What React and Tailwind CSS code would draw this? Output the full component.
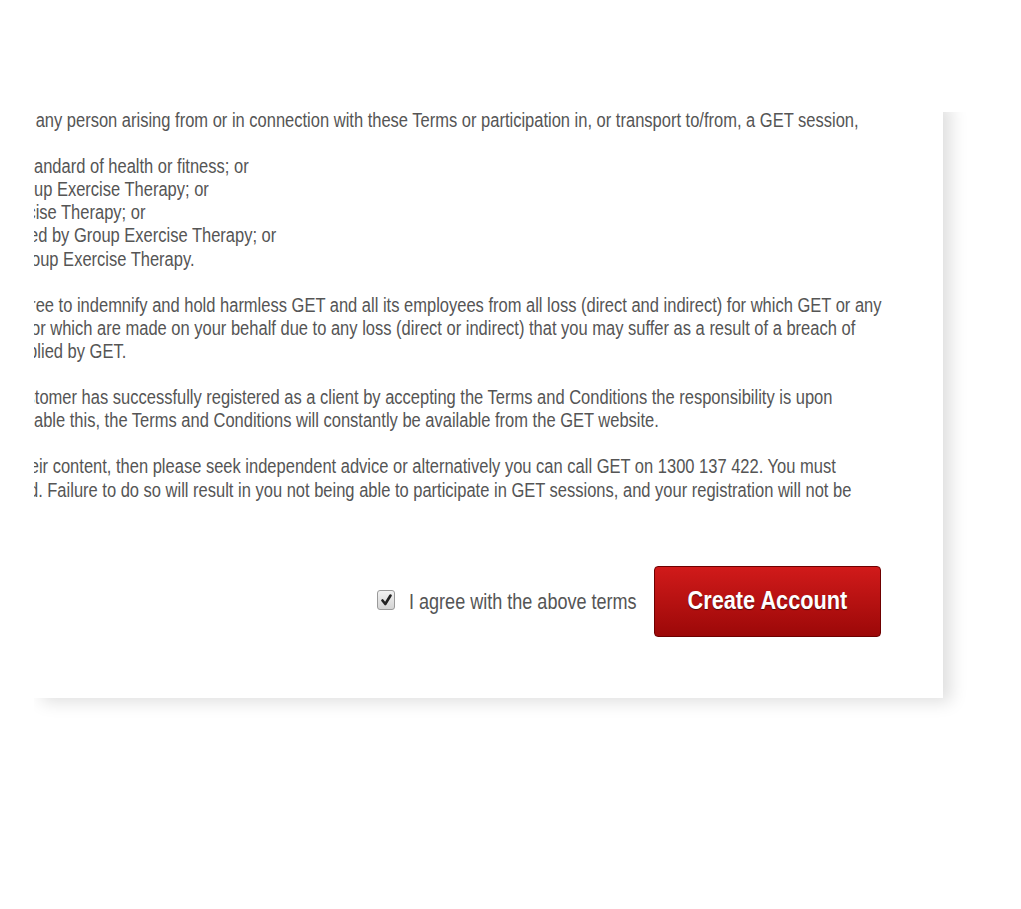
import React from "react";

const FONT = { fontFamily: '"Liberation Sans", Arial, sans-serif' };

// each line: [hidden prefix (clipped), visible px of the prefix, visible text]
const PARAGRAPHS = [
  [["", 2, "any person arising from or in connection with these Terms or participation in, or transport to/from, a GET session,"]],
  [
    ["st", 0, "andard of health or fitness; or"],
    ["Gro", 0, "up Exercise Therapy; or"],
    ["Exerc", 2, "ise Therapy; or"],
    ["provide", 5, "d by Group Exercise Therapy; or"],
    ["Gro", 7.5, "up Exercise Therapy."],
  ],
  [
    ["agr", 2, "ee to indemnify and hold harmless GET and all its employees from all loss (direct and indirect) for which GET or any"],
    ["fo", 7.5, "r which are made on your behalf due to any loss (direct or indirect) that you may suffer as a result of a breach of"],
    ["ap", 4, "lied by GET."],
  ],
  [
    ["cus", 1, "tomer has successfully registered as a client by accepting the Terms and Conditions the responsibility is upon"],
    ["en", 0, "able this, the Terms and Conditions will constantly be available from the GET website."],
  ],
  [
    ["the", 6, "ir content, then please seek independent advice or alternatively you can call GET on 1300 137 422. You must"],
    ["understood", 5, ". Failure to do so will result in you not being able to participate in GET sessions, and your registration will not be"],
  ],
];

function Line({ prefix, shown, text }) {
  return (
    <div className="flex whitespace-nowrap">
      <span className="flex shrink-0 justify-end overflow-hidden" style={{ width: shown }}>
        <span className="whitespace-pre">{prefix}</span>
      </span>
      <span>{text}</span>
    </div>
  );
}

export default function App() {
  return (
    <div className="h-[909px] w-[1021px] overflow-hidden bg-white pt-[112px]" style={FONT}>
      <div className="ml-[34px] h-[620px] w-[970px] overflow-hidden">
        <div className="-mt-[12px] w-[909px] overflow-x-hidden bg-white pt-[9px] shadow-[8px_4px_16px_rgba(0,0,0,0.13)]">
          <div className="origin-left scale-x-[0.825] text-[20px] leading-[23.1px] text-[#555]">
            {PARAGRAPHS.map((p, i) => (
              <div key={i} className="mb-[23.1px] last:mb-0">
                {p.map(([prefix, shown, text], j) => (
                  <Line key={j} prefix={prefix} shown={shown} text={text} />
                ))}
              </div>
            ))}
          </div>

          <div className="flex items-center justify-end pb-[61px] pr-[62px] pt-[64px]">
            <span className="mt-[-2px] flex h-[20px] w-[18px] items-center justify-center rounded-[3px] border border-[#9a9a9a] bg-gradient-to-b from-[#f2f2f2] to-[#d4d4d4]">
              <svg width="11" height="12" viewBox="0 0 11 12">
                <path d="M1.5 6.5 L4.3 10 L9.5 1.5" fill="none" stroke="#222" strokeWidth="2.6" strokeLinecap="round" strokeLinejoin="round" />
              </svg>
            </span>
            <span className="ml-[14px] w-[227px] whitespace-nowrap text-[22px] text-[#555]">
              <span className="inline-block origin-left scale-x-[0.82]">I agree with the above terms</span>
            </span>
            <button className="ml-[18px] flex h-[71px] w-[227px] items-center justify-center rounded-[4px] border border-[#6e0000] bg-gradient-to-b from-[#d11a1a] to-[#9c0808] text-[26.5px] font-bold text-white [text-shadow:0_1px_1px_rgba(60,0,0,0.8)]">
              <span className="inline-block whitespace-nowrap scale-x-[0.82]">Create Account</span>
            </button>
          </div>
        </div>
      </div>
    </div>
  );
}
